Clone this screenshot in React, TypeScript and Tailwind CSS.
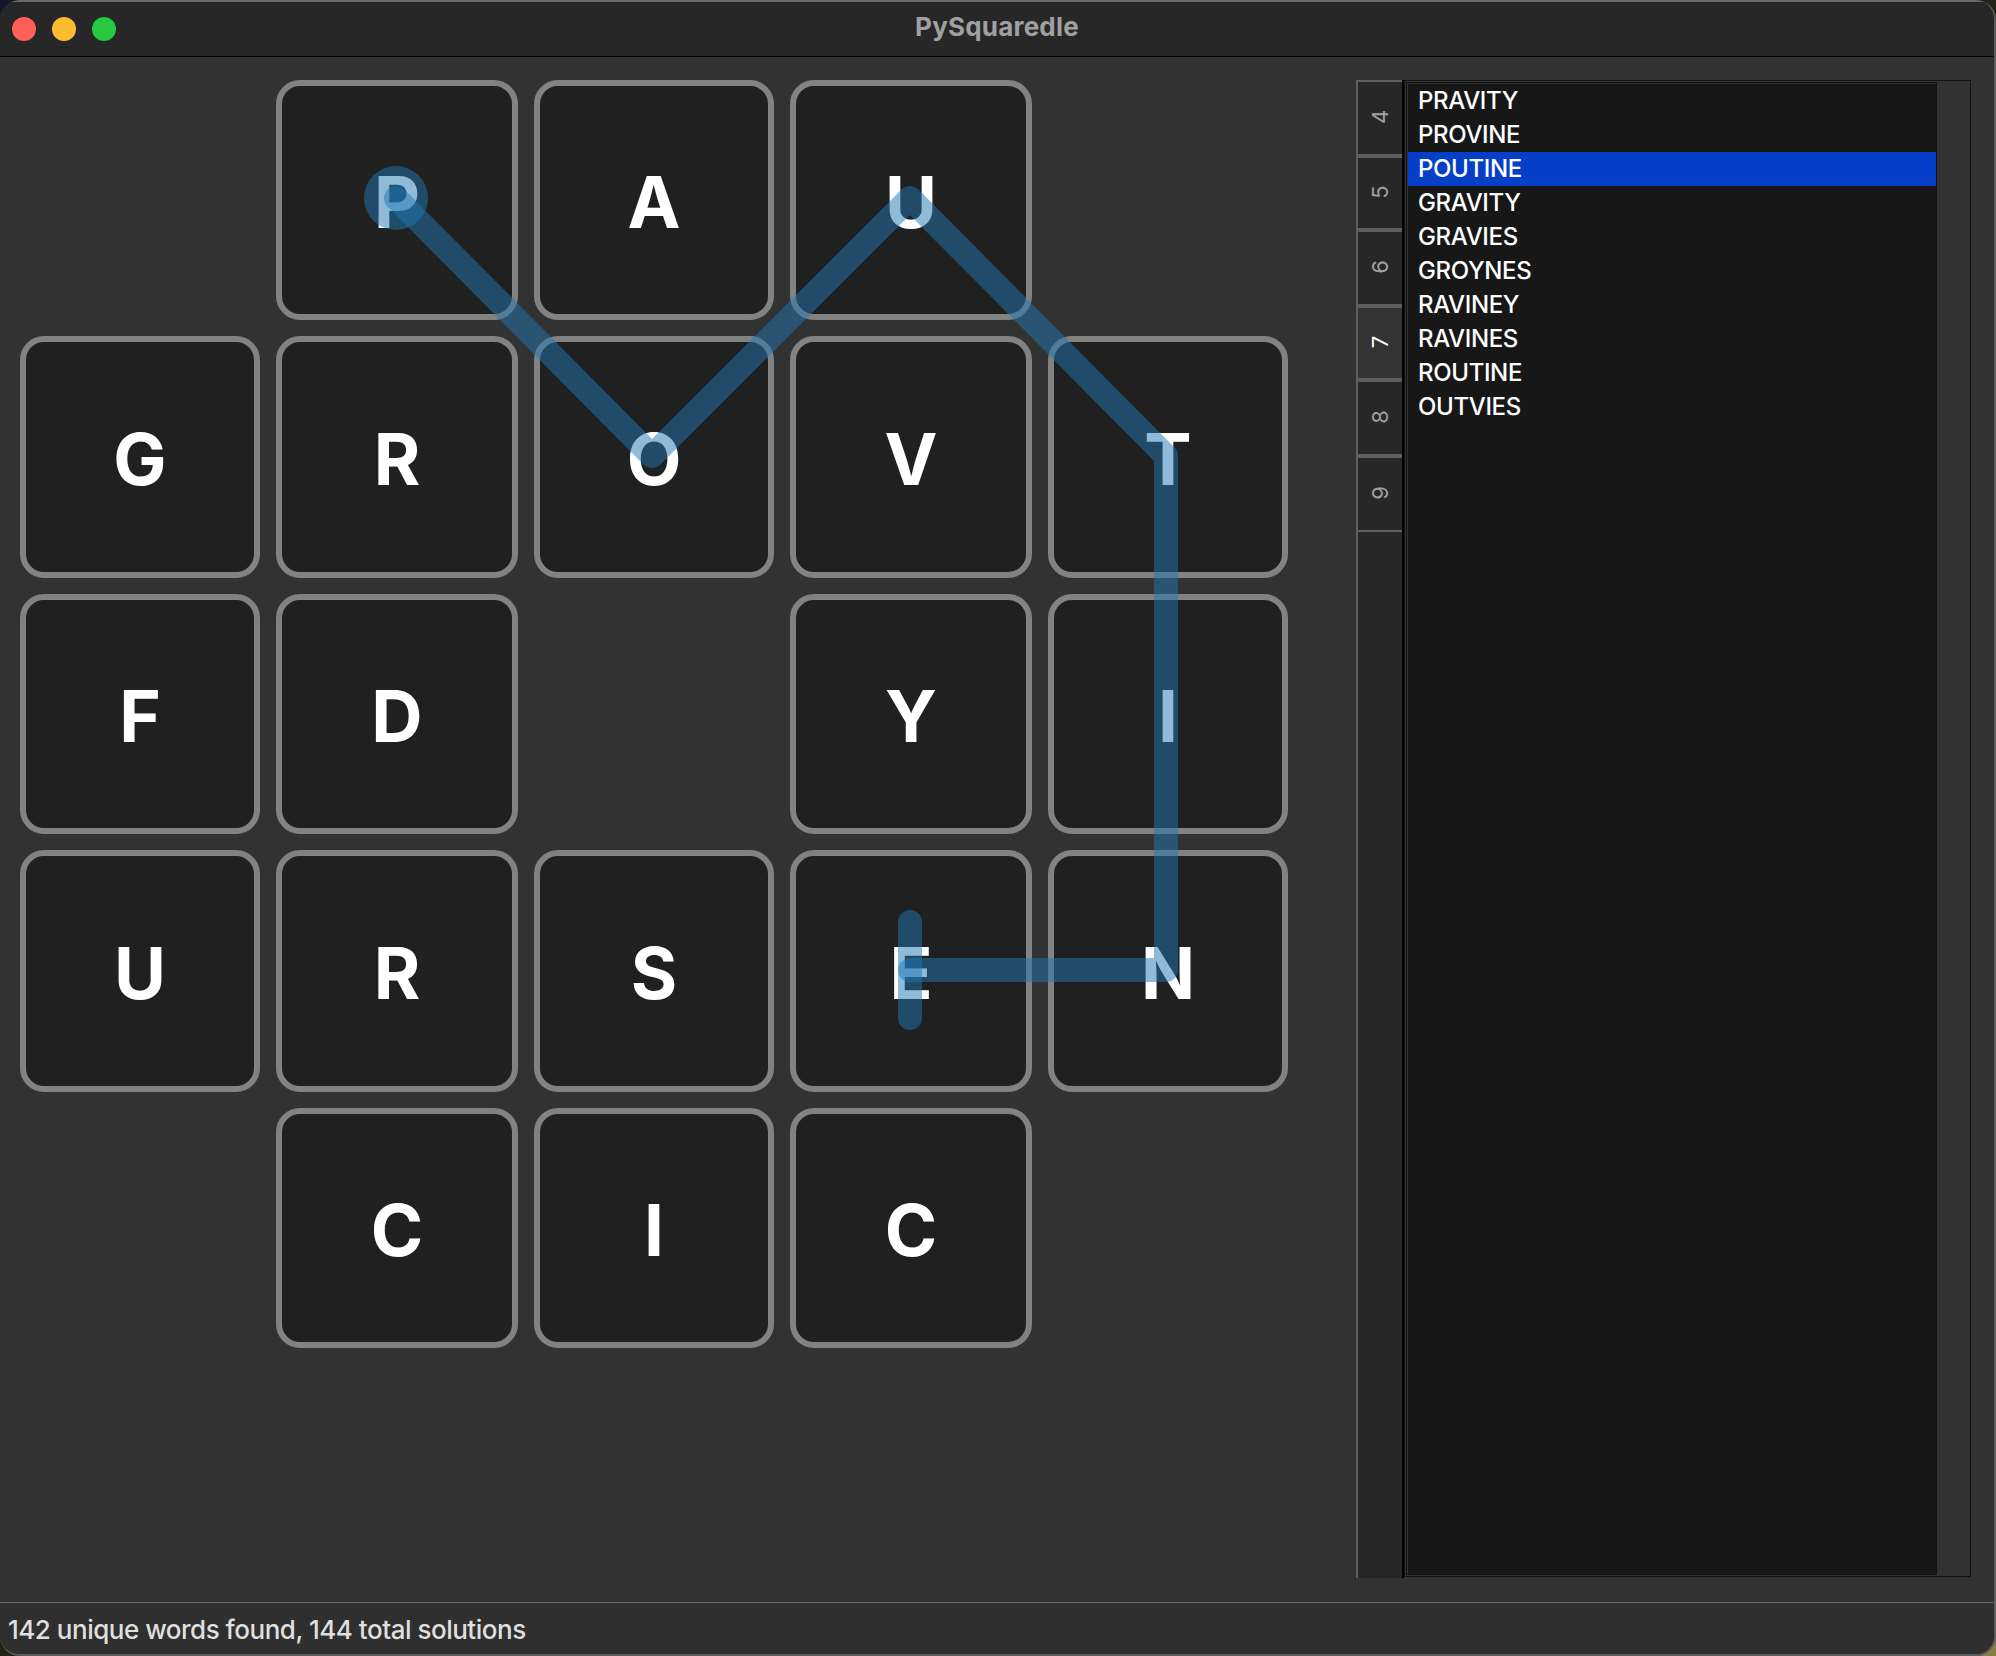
const ROWS = [' PAU ', 'GROVT', 'FD YI', 'URSEN', ' CIC '];

const TABS = [
  { label: '4', size: 'h-[72px]' },
  { label: '5', size: 'h-[70px]' },
  { label: '6', size: 'h-[72px]' },
  { label: '7', size: 'h-[70px]' },
  { label: '8', size: 'h-[72px]' },
  { label: '9', size: 'h-[72px]' },
];

const WORDS = [
  'PRAVITY', 'PROVINE', 'POUTINE', 'GRAVITY', 'GRAVIES',
  'GROYNES', 'RAVINEY', 'RAVINES', 'ROUTINE', 'OUTVIES',
];

function TitleBar() {
  return (
    <header className="relative flex h-[57px] shrink-0 items-center border-t-2 border-b border-t-[#6b6b6b] border-b-black bg-[#272727] pl-3">
      <div className="flex gap-4">
        <span className="size-6 rounded-full bg-[#ff5f57]" />
        <span className="size-6 rounded-full bg-[#febc2e]" />
        <span className="size-6 rounded-full bg-[#28c840]" />
      </div>
      <h1 className="absolute inset-x-0 top-[8px] text-center text-[26px] leading-[34px] font-bold tracking-[0.2px] text-[#a0a0a0]">
        PySquaredle
      </h1>
    </header>
  );
}

function Board() {
  return (
    <div className="relative mt-[23px] ml-5 h-[1268px] w-[1268px] shrink-0">
      <div className="grid grid-cols-[240px_242px_240px_242px_240px] grid-rows-[240px_242px_240px_242px_240px] gap-4">
        {ROWS.flatMap((row, r) =>
          row.split('').map((letter, c) =>
            letter === ' ' ? (
              <div key={`${r}-${c}`} />
            ) : (
              <div
                key={`${r}-${c}`}
                className="flex items-center justify-center rounded-[24px] border-6 border-[#828282] bg-[#202020] pt-[4px] text-[71px] leading-none font-bold text-white"
              >
                {letter}
              </div>
            ),
          ),
        )}
      </div>
      <svg className="absolute top-0 left-0" width="1268" height="1268" viewBox="20 80 1268 1268" fill="none">
        <circle cx="396" cy="198" r="32" fill="#1f77b4" fillOpacity="0.5" />
        <path
          d="M396 198 L652 456 L910 198 L1166 456 L1166 970 L910 970"
          stroke="#1f77b4"
          strokeOpacity="0.5"
          strokeWidth="24"
          strokeLinecap="round"
          strokeLinejoin="round"
        />
        <path d="M910 922 V1018" stroke="#1f77b4" strokeOpacity="0.5" strokeWidth="24" strokeLinecap="round" />
      </svg>
    </div>
  );
}

function WordPanel() {
  return (
    <div className="mt-[23px] mr-[23px] ml-auto flex h-[1498px] w-[615px]">
      <div className="flex w-[46px] flex-col border-t-2 border-l-2 border-[#5e5e5e] bg-[#272727]">
        {TABS.map(({ label, size }) => (
          <div
            key={label}
            className={`box-content flex shrink-0 items-center justify-center border-[#5e5e5e] ${size} ${
              label === '9' ? 'border-b-2' : 'border-b-4'
            } ${label === '7' ? 'bg-[#333333] text-white' : 'text-[#a0a0a0]'}`}
          >
            <span className="relative -top-px -rotate-90 text-[22px] leading-none">{label}</span>
          </div>
        ))}
      </div>
      <div className="w-[2px] bg-black" />
      <div className="flex h-[1497px] w-[567px] border border-[#111111] bg-[#323232] p-px">
        <div className="flex w-[531px] border border-[#111111]">
          <ul className="flex-1 border-t border-l border-[#323232] bg-[#171717]">
            {WORDS.map((word) => (
              <li
                key={word}
                className={`h-[34px] pl-[10px] text-[24px] leading-[34px] font-medium tracking-[-0.36px] text-white ${
                  word === 'POUTINE' ? 'bg-[#053fc7]' : ''
                }`}
              >
                {word}
              </li>
            ))}
          </ul>
        </div>
      </div>
    </div>
  );
}

export default function App() {
  return (
    <div className="h-[1656px] w-[1996px] bg-[linear-gradient(135deg,#14172a_0%,#14172a_20%,#232315_45%,#232315_55%,#8b7d48_90%)] font-['Inter',sans-serif]">
      <div className="flex h-full flex-col overflow-hidden rounded-[20px] border-r-2 border-b-2 border-[#5c5c5c] bg-[#323232]">
        <TitleBar />
        <main className="flex flex-1">
          <Board />
          <WordPanel />
        </main>
        <footer className="h-[52px] shrink-0 border-t border-[#6b6b6b] bg-[#2f2f2f] pl-2 text-[26px] leading-[54px] font-medium tracking-[-0.49px] text-[#dfdfdf]">
          142 unique words found, 144 total solutions
        </footer>
      </div>
    </div>
  );
}
